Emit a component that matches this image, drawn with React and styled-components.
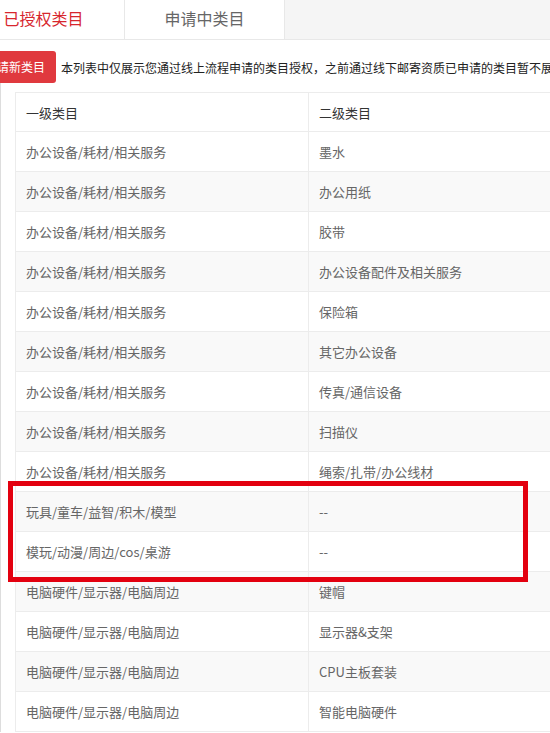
import React from 'react';
import styled, { createGlobalStyle } from 'styled-components';

const rows = [
  ['办公设备/耗材/相关服务', '墨水'],
  ['办公设备/耗材/相关服务', '办公用纸'],
  ['办公设备/耗材/相关服务', '胶带'],
  ['办公设备/耗材/相关服务', '办公设备配件及相关服务'],
  ['办公设备/耗材/相关服务', '保险箱'],
  ['办公设备/耗材/相关服务', '其它办公设备'],
  ['办公设备/耗材/相关服务', '传真/通信设备'],
  ['办公设备/耗材/相关服务', '扫描仪'],
  ['办公设备/耗材/相关服务', '绳索/扎带/办公线材'],
  ['玩具/童车/益智/积木/模型', '--'],
  ['模玩/动漫/周边/cos/桌游', '--'],
  ['电脑硬件/显示器/电脑周边', '键帽'],
  ['电脑硬件/显示器/电脑周边', '显示器&支架'],
  ['电脑硬件/显示器/电脑周边', 'CPU主板套装'],
  ['电脑硬件/显示器/电脑周边', '智能电脑硬件'],
];

class App extends React.Component {
  render() {
    return (
      <Page>
        <GlobalStyle />
        <Tabs>
          <Tab active>已授权类目</Tab>
          <Tab bordered>申请中类目</Tab>
          <TabFiller />
        </Tabs>
        <Body>
          <Notice>
            <ApplyButton>申请新类目</ApplyButton>
            <NoticeText>
              本列表中仅展示您通过线上流程申请的类目授权，之前通过线下邮寄资质已申请的类目暂不展示
            </NoticeText>
          </Notice>
          <Table>
            <HeadRow>
              <Cell head>一级类目</Cell>
              <Cell head second>二级类目</Cell>
            </HeadRow>
            {rows.map((r, i) => (
              <Row key={i} striped={i % 2 === 1}>
                <Cell>{r[0]}</Cell>
                <Cell second>{r[1]}</Cell>
              </Row>
            ))}
          </Table>
        </Body>
        <Highlight />
      </Page>
    );
  }
}

const GlobalStyle = createGlobalStyle`
  html, body {
    margin: 0;
    padding: 0;
    background: #ffffff;
    overflow: hidden;
  }
  body {
    font-family: "Noto Sans CJK SC", "Noto Sans", sans-serif;
  }
`;

const Page = styled.div`
  position: relative;
  width: 550px;
  height: 733px;
  overflow: hidden;
`;

const Tabs = styled.div`
  display: flex;
  height: 40px;
  border-bottom: 1px solid #e8e8e8;
  box-sizing: border-box;
  margin-left: -37px;
`;

const Tab = styled.div`
  flex: 0 0 161px;
  display: flex;
  align-items: center;
  justify-content: center;
  font-size: 16px;
  color: ${props => (props.active ? '#d7262e' : '#666666')};
  background: #ffffff;
  border-left: ${props => (props.bordered ? '1px solid #e8e8e8' : 'none')};
  border-right: ${props => (props.bordered ? '1px solid #e8e8e8' : 'none')};
  box-sizing: border-box;
  padding-bottom: 4px;
`;

const TabFiller = styled.div`
  flex: 1;
  background: #f5f5f5;
`;

const Body = styled.div`
  border-left: 1px solid #dddddd;
`;

const Notice = styled.div`
  display: flex;
  align-items: center;
  gap: 5px;
  margin-top: 11px;
  margin-left: -26px;
  height: 32px;
`;

const ApplyButton = styled.div`
  flex: none;
  height: 32px;
  line-height: 32px;
  padding: 0 11px 0 10px;
  background: #e0393e;
  border-radius: 3px;
  color: #ffffff;
  font-size: 12px;
`;

const NoticeText = styled.div`
  font-size: 12px;
  color: #222222;
  white-space: nowrap;
`;

const Table = styled.div`
  margin: 9px 0 0 14px;
  width: 560px;
  border-top: 1px solid #ececec;
  border-left: 1px solid #ececec;
`;

const Row = styled.div`
  display: grid;
  grid-template-columns: 292px 1fr;
  height: 40px;
  box-sizing: border-box;
  border-bottom: 1px solid #ececec;
  background: ${props => (props.striped ? '#f9f9f9' : '#ffffff')};
`;

const HeadRow = styled(Row)`
  height: 39px;
`;

const Cell = styled.div`
  display: flex;
  align-items: center;
  padding-left: 10px;
  font-size: 13px;
  color: ${props => (props.head ? '#333333' : '#666666')};
  border-left: ${props => (props.second ? '1px solid #ececec' : 'none')};
  white-space: nowrap;
`;

const Highlight = styled.div`
  position: absolute;
  left: 8px;
  top: 481px;
  width: 520px;
  height: 101px;
  box-sizing: border-box;
  border: 5px solid #e3000f;
  pointer-events: none;
`;

export default App;
